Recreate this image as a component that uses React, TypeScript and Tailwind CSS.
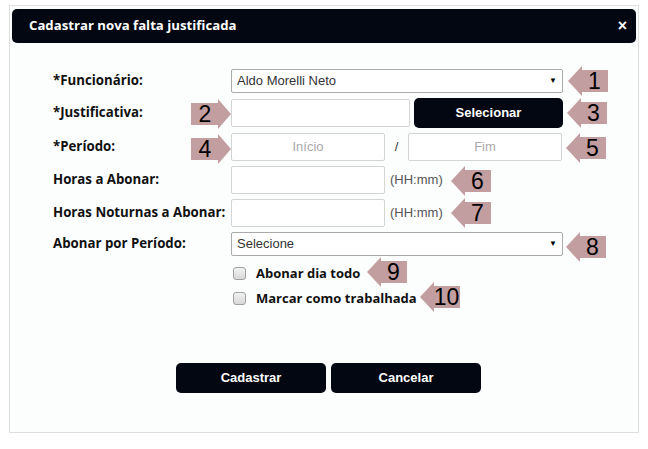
import React from 'react';

const labelFont = { fontFamily: '"Open Sans", "Noto Sans", sans-serif' };
const inputFont = { fontFamily: '"Liberation Sans", Arial, sans-serif' };

interface MarkerProps {
  n: number;
  dir: 'left' | 'right';
  left: number;
  top: number;
}

// numbered annotation arrow drawn over the form
const Marker: React.FC<MarkerProps> = ({ n, dir, left, top }) => {
  const isLeft = dir === 'left';
  return (
    <div className="absolute w-[40px] h-[30px]" style={{ left, top }}>
      <svg width="40" height="30" viewBox="0 0 40 30" className="absolute inset-0">
        {isLeft ? (
          <>
            <polygon points="0,15 14,0 14,30" fill="#c29ea0" />
            <rect x="13" y="4" width="27" height="22" fill="#c29ea0" />
          </>
        ) : (
          <>
            <polygon points="40,15 27,0 27,30" fill="#c29ea0" />
            <rect x="0" y="4" width="28" height="22" fill="#c29ea0" />
          </>
        )}
      </svg>
      <span
        className={`absolute top-0 h-[30px] flex items-center justify-center text-[23px] leading-none text-black ${
          isLeft ? 'left-[13px] w-[27px]' : 'left-0 w-[28px]'
        }`}
        style={inputFont}
      >
        {n}
      </span>
    </div>
  );
};

const Label: React.FC<{ children: React.ReactNode }> = ({ children }) => (
  <div className="w-[178px] shrink-0 text-[13.25px] font-bold text-[#111]" style={labelFont}>
    {children}
  </div>
);

const DarkButton: React.FC<{ children: React.ReactNode; className?: string }> = ({ children, className }) => (
  <button
    className={`bg-[#030712] text-white font-bold text-[13px] rounded-[5px] flex items-center justify-center ${className ?? ''}`}
    style={inputFont}
  >
    {children}
  </button>
);

const Checkbox: React.FC = () => (
  <span className="w-[13px] h-[13px] rounded-[3px] border border-[#a0a0a0] bg-gradient-to-b from-[#f2f2f2] to-[#d8d8d8] shrink-0" />
);

export default function App() {
  return (
    <div className="relative w-[648px] h-[449px] bg-white pt-[5px] pl-[9px]">
      <div className="w-[630px] h-[428px] border border-[#dedede] bg-[#fcfdfd] pt-[3px] px-[2px]">
        {/* Header */}
        <div className="h-[34px] rounded-[5px] bg-[#030712] flex items-center justify-between pl-[17px] pr-[9px]">
          <span className="text-white font-bold text-[13.2px]" style={labelFont}>
            Cadastrar nova falta justificada
          </span>
          <span className="text-white font-bold text-[16px] leading-none" style={inputFont}>
            ×
          </span>
        </div>

        {/* Form */}
        <div className="pl-[41px] pt-[26px] flex flex-col gap-[5px]">
          <div className="flex items-center h-[24px]">
            <Label>*Funcionário:</Label>
            <div
              className="w-[332px] h-[24px] border border-[#aaa] rounded-[2px] bg-white flex items-center justify-between pl-[5px] pr-[5px] text-[13px] text-[#333]"
              style={inputFont}
            >
              <span>Aldo Morelli Neto</span>
              <span className="text-[8px] text-black">▼</span>
            </div>
          </div>

          <div className="flex items-center h-[30px]">
            <Label>*Justificativa:</Label>
            <div className="w-[179px] h-[28px] border border-[#d4d4d4] rounded-[2px] bg-white" />
            <DarkButton className="ml-[4px] w-[149px] h-[30px]">Selecionar</DarkButton>
          </div>

          <div className="flex items-center h-[28px]">
            <Label>*Período:</Label>
            <div
              className="w-[154px] h-[28px] border border-[#d4d4d4] rounded-[2px] bg-white flex items-center justify-center text-[13px] text-[#a9a9a9]"
              style={inputFont}
            >
              Início
            </div>
            <span className="w-[23px] text-center text-[13px] text-[#333]" style={inputFont}>
              /
            </span>
            <div
              className="w-[154px] h-[28px] border border-[#d4d4d4] rounded-[2px] bg-white flex items-center justify-center text-[13px] text-[#a9a9a9]"
              style={inputFont}
            >
              Fim
            </div>
          </div>

          <div className="flex items-center h-[28px]">
            <Label>Horas a Abonar:</Label>
            <div className="w-[154px] h-[28px] border border-[#d4d4d4] rounded-[2px] bg-white" />
            <span className="ml-[5px] text-[13px] text-[#555]" style={inputFont}>
              (HH:mm)
            </span>
          </div>

          <div className="flex items-center h-[28px]">
            <Label>Horas Noturnas a Abonar:</Label>
            <div className="w-[154px] h-[28px] border border-[#d4d4d4] rounded-[2px] bg-white" />
            <span className="ml-[5px] text-[13px] text-[#555]" style={inputFont}>
              (HH:mm)
            </span>
          </div>

          <div className="flex items-center h-[24px]">
            <Label>Abonar por Período:</Label>
            <div
              className="w-[332px] h-[24px] border border-[#aaa] rounded-[2px] bg-white flex items-center justify-between pl-[5px] pr-[5px] text-[13px] text-[#333]"
              style={inputFont}
            >
              <span>Selecione</span>
              <span className="text-[8px] text-black">▼</span>
            </div>
          </div>

          <div className="pl-[180px] pt-[4px] flex flex-col gap-[8px]">
            <label className="flex items-center gap-[10px] h-[17px]">
              <Checkbox />
              <span className="text-[13px] font-bold text-[#111]" style={labelFont}>
                Abonar dia todo
              </span>
            </label>
            <label className="flex items-center gap-[10px] h-[17px]">
              <Checkbox />
              <span className="text-[13px] font-bold text-[#111]" style={labelFont}>
                Marcar como trabalhada
              </span>
            </label>
          </div>
        </div>

        <div className="flex gap-[5px] pl-[164px] mt-[56px]">
          <DarkButton className="w-[150px] h-[30px]">Cadastrar</DarkButton>
          <DarkButton className="w-[150px] h-[30px]">Cancelar</DarkButton>
        </div>
      </div>

      <Marker n={1} dir="left" left={568} top={66} />
      <Marker n={2} dir="right" left={191} top={99} />
      <Marker n={3} dir="left" left={567} top={98} />
      <Marker n={4} dir="right" left={191} top={134} />
      <Marker n={5} dir="left" left={566} top={133} />
      <Marker n={6} dir="left" left={451} top={166} />
      <Marker n={7} dir="left" left={451} top={198} />
      <Marker n={8} dir="left" left={566} top={232} />
      <Marker n={9} dir="left" left={367} top={257} />
      <Marker n={10} dir="left" left={420} top={282} />
    </div>
  );
}
